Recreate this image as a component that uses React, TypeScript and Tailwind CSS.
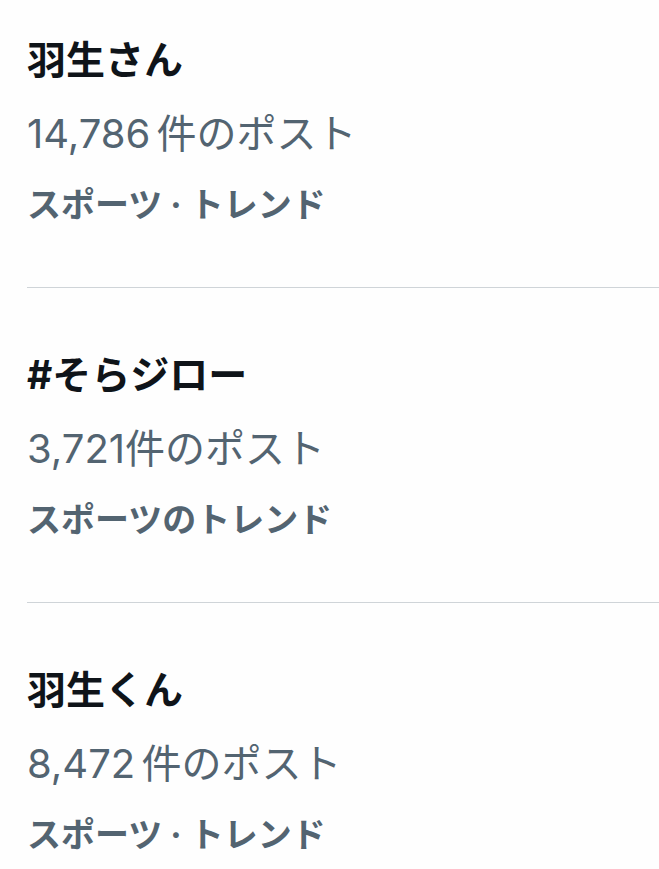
import React from 'react';

interface TrendProps {
  title: string;
  posts: string;
  category: string;
  first?: boolean;
  last?: boolean;
}

const trends: TrendProps[] = [
  { title: '羽生さん', posts: '14,786 件のポスト', category: 'スポーツ · トレンド' },
  { title: '#そらジロー', posts: '3,721件のポスト', category: 'スポーツのトレンド' },
  { title: '羽生くん', posts: '8,472 件のポスト', category: 'スポーツ · トレンド' },
];

const Trend = ({ title, posts, category, first, last }: TrendProps) => {
  return (
    <div
      className={`flex flex-col ${first ? 'pt-[22px]' : 'pt-[49px]'} ${
        last ? '' : 'pb-[47px] border-b border-[#cfd4d8]'
      }`}
    >
      <span className="text-[39px] leading-[76px] font-bold text-[#0f1419] whitespace-nowrap">
        {title}
      </span>
      <span className="text-[40px] leading-[72px] text-[#536471] whitespace-nowrap [word-spacing:-5px]">
        {posts}
      </span>
      <span className="text-[34px] leading-[70px] font-bold text-[#536471] whitespace-nowrap">
        {category}
      </span>
    </div>
  );
};

export default function App() {
  return (
    <div
      className="w-[659px] h-[869px] overflow-hidden bg-[#fefefe] pl-[27px]"
      style={{ fontFamily: 'Inter, "Noto Sans CJK JP", "Noto Sans", sans-serif' }}
    >
      {trends.map((t, i) => (
        <Trend key={i} {...t} first={i === 0} last={i === trends.length - 1} />
      ))}
    </div>
  );
}
